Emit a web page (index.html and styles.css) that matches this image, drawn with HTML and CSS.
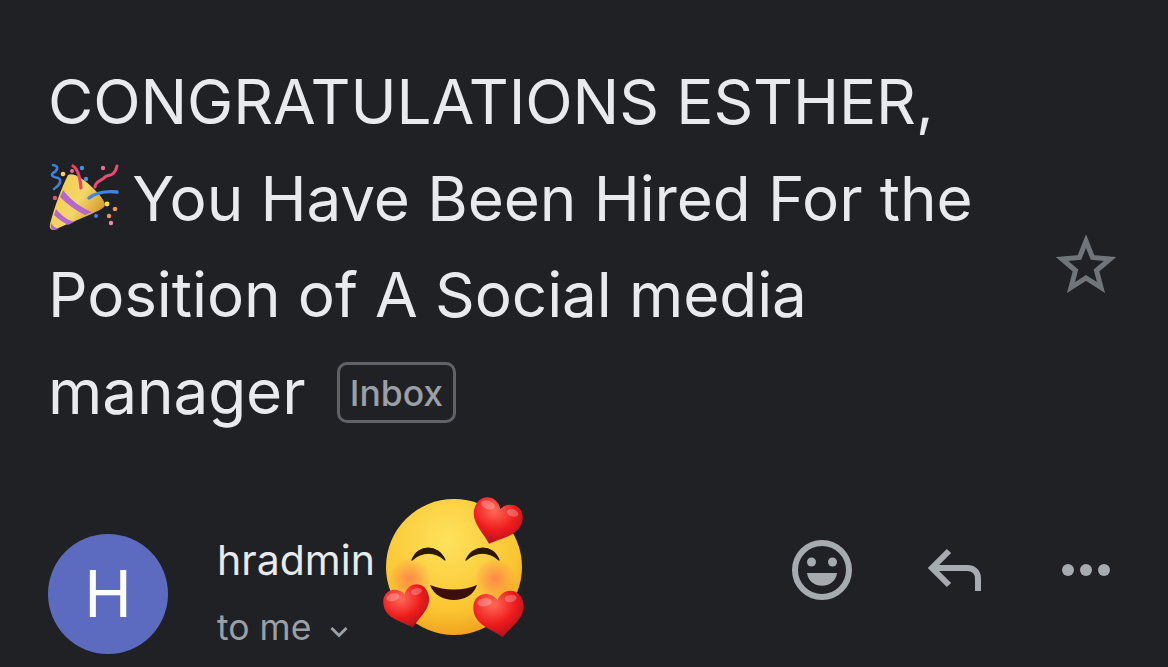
FILE: index.html
```html
<!DOCTYPE html>
<html lang="en">

<head>
    <meta charset="UTF-8">
    <meta name="viewport" content="width=device-width, initial-scale=1.0">
    <title>Email</title>
    <link rel="stylesheet" href="styles.css">
</head>

<body>
    <svg class="defs" width="0" height="0" aria-hidden="true">
        <defs>
            <radialGradient id="faceFill" cx="45%" cy="30%" r="75%">
                <stop offset="0" stop-color="#fde25c"/>
                <stop offset="0.7" stop-color="#fbc531"/>
                <stop offset="1" stop-color="#ee9a1c"/>
            </radialGradient>
            <radialGradient id="heartFill" cx="40%" cy="25%" r="80%">
                <stop offset="0" stop-color="#ff6a5a"/>
                <stop offset="0.55" stop-color="#ee1c1c"/>
                <stop offset="1" stop-color="#a80f1e"/>
            </radialGradient>
            <radialGradient id="blushFill">
                <stop offset="0" stop-color="#ff6b4f" stop-opacity="0.7"/>
                <stop offset="1" stop-color="#ff6b4f" stop-opacity="0"/>
            </radialGradient>
            <linearGradient id="coneFill" x1="0" y1="0" x2="1" y2="0.6">
                <stop offset="0" stop-color="#f7c843"/>
                <stop offset="0.6" stop-color="#f3d76a"/>
                <stop offset="1" stop-color="#d5972a"/>
            </linearGradient>
            <g id="heart">
                <path d="M0 -9C-5 -19 -21 -18 -21 -3C-21 9 -7 15 0 22C7 15 21 9 21 -3C21 -18 5 -19 0 -9Z"/>
                <ellipse cx="-11" cy="-9" rx="6" ry="3.500" fill="#fff" opacity="0.250"/>
                <ellipse cx="11" cy="-9" rx="5" ry="3" fill="#fff" opacity="0.250"/>
            </g>
        </defs>
    </svg>

    <main class="message">
        <section class="subject-row">
            <h1 class="subject">
                CONGRATULATIONS ESTHER,<br>
                <svg class="popper" viewBox="0 0 72 68" aria-hidden="true">
                    <path d="M20 12C25 9 36 16 46 26C54 34 59 41 56 44C50 49 34 55 8 66C4 68 1 66 2 61C7 42 14 24 20 12Z" fill="url(#coneFill)"/>
                    <path d="M15 27C21 35 31 44 44 49L37 52C27 47 18 40 12 34Z" fill="#b566cf"/>
                    <path d="M8 46C13 52 19 57 26 59L20 62C15 59 10 56 6 52Z" fill="#b566cf"/>
                    <path d="M3 60C5 63 7 65 11 66L6 67C4 67 2 65 3 60Z" fill="#b566cf"/>
                    <path d="M5 2C12 3 9 8 5 10C2 13 6 14 10 15C15 17 11 23 6 26" fill="none" stroke="#3d7fe0" stroke-width="2.6" stroke-linecap="round"/>
                    <path d="M25 3C30 6 32 14 33 25" fill="none" stroke="#ef3f6b" stroke-width="3.2" stroke-linecap="round"/>
                    <path d="M47 24C47 18 54 18 57 14C60 11 66 15 69 3" fill="none" stroke="#ef4a74" stroke-width="3" stroke-linecap="round"/>
                    <path d="M41 35C49 29 59 28 69 29" fill="none" stroke="#3d86e8" stroke-width="3.4" stroke-linecap="round"/>
                    <circle cx="15" cy="11" r="2.300" fill="#f6d84a"/>
                    <circle cx="24" cy="8" r="2" fill="#ef6a9a"/>
                    <circle cx="34" cy="5" r="2.200" fill="#3d94e8"/>
                    <circle cx="38" cy="16" r="2.200" fill="#3d94e8"/>
                    <circle cx="55" cy="5" r="2.200" fill="#ef6a9a"/>
                    <circle cx="7" cy="35" r="2.200" fill="#e0557a"/>
                    <circle cx="59" cy="41" r="2.400" fill="#f6e04a"/>
                    <circle cx="67" cy="46" r="2.300" fill="#ee9a45"/>
                    <circle cx="61" cy="53" r="2.200" fill="#ee9a45"/>
                    <circle cx="48" cy="53" r="2" fill="#3d86e8"/>
                    <circle cx="63" cy="60" r="2.200" fill="#ef8aa8"/>
                </svg>
                You Have Been Hired For the Position of A Social media manager
                <span class="label">Inbox</span>
            </h1>
            <button class="star" aria-label="Star">
                <svg viewBox="0 0 60 58" width="60" height="58">
                    <path d="M30 6L36.500 22.500L54 24L40.500 35.500L45 52.500L30 43L15 52.500L19.500 35.500L6 24L23.500 22.500Z" fill="none" stroke="#70757a" stroke-width="5"/>
                </svg>
            </button>
        </section>

        <section class="sender-row">
            <div class="avatar">H</div>
            <div class="sender">
                <div class="sender-name">hradmin</div>
                <div class="sender-to">to me
                    <svg viewBox="0 0 20 12" width="20" height="12">
                        <path d="M2.500 2L10 9.500L17.500 2" fill="none" stroke="#9aa0a6" stroke-width="3"/>
                    </svg>
                </div>
                <svg class="reaction" viewBox="0 0 144 144" aria-hidden="true">
                    <circle cx="71" cy="70" r="68" fill="url(#faceFill)"/>
                    <circle cx="27" cy="82" r="21" fill="url(#blushFill)"/>
                    <circle cx="112" cy="82" r="21" fill="url(#blushFill)"/>
                    <path d="M29 63C35 47 55 47 62 63C52 54 39 54 29 63Z" fill="#2b1708" stroke="#2b1708" stroke-width="1.200" stroke-linejoin="round"/>
                    <path d="M83 63C90 47 110 47 116 63C106 54 93 54 83 63Z" fill="#2b1708" stroke="#2b1708" stroke-width="1.200" stroke-linejoin="round"/>
                    <path d="M47 88C62 94 80 94 94 88C88 108 54 108 47 88Z" fill="#3c0f0a"/>
                    <use href="#heart" transform="translate(114 22) rotate(18) scale(1.180)" fill="url(#heartFill)"/>
                    <use href="#heart" transform="translate(24 107) rotate(-14) scale(1.100)" fill="url(#heartFill)"/>
                    <use href="#heart" transform="translate(116 114) rotate(-8) scale(1.200)" fill="url(#heartFill)"/>
                </svg>
            </div>
            <div class="actions">
                <svg viewBox="0 0 62 62" width="62" height="62">
                    <circle cx="31" cy="31" r="27" fill="none" stroke="#a6abb0" stroke-width="6"/>
                    <circle cx="20.500" cy="23" r="4.500" fill="#a6abb0"/>
                    <circle cx="41.500" cy="23" r="4.500" fill="#a6abb0"/>
                    <path d="M16 34H46C44 51 18 51 16 34Z" fill="#a6abb0"/>
                </svg>
                <svg viewBox="0 0 56 44" width="56" height="44">
                    <path d="M22 3L5 20L22 37M5 20H40C48 20 51 25 51 31V43" fill="none" stroke="#a6abb0" stroke-width="6"/>
                </svg>
                <svg class="more" viewBox="0 0 50 14" width="50" height="14">
                    <circle cx="7" cy="7" r="6" fill="#a6abb0"/>
                    <circle cx="25" cy="7" r="6" fill="#a6abb0"/>
                    <circle cx="43" cy="7" r="6" fill="#a6abb0"/>
                </svg>
            </div>
        </section>
    </main>
</body>

</html>
```

FILE: styles.css
```css
html,
body {
    height: 100%;
}

body {
    margin: 0;
    overflow: hidden;
    background-color: #202124;
    font-family: Inter, "Liberation Sans", sans-serif;
}

.defs {
    display: block;
}

.message {
    padding: 54px 57px 0 48px;
}

.subject-row {
    display: flex;
    gap: 60px;
}

.subject {
    flex: 1;
    margin: 0;
    color: #e8eaed;
    font-size: 62px;
    font-weight: 400;
    line-height: 96.500px;
    letter-spacing: -0.100px;
}

.popper {
    width: 72px;
    height: 68px;
    margin-right: -5px;
    vertical-align: -10px;
}

.label {
    display: inline-block;
    margin-left: 14px;
    padding: 3px 10px 0;
    border: 3px solid #5f6368;
    border-radius: 10px;
    color: #9aa0a6;
    font-size: 35.500px;
    font-weight: 500;
    line-height: 52px;
    letter-spacing: 0;
    vertical-align: 8px;
}

.star {
    flex: none;
    align-self: flex-start;
    display: flex;
    margin-top: 181px;
    margin-right: -5px;
    padding: 0;
    border: none;
    background: none;
}

.sender-row {
    display: flex;
    align-items: center;
    margin-top: 94px;
}

.avatar {
    flex: none;
    width: 120px;
    height: 120px;
    border-radius: 50%;
    background-color: #5c6bc0;
    color: #fff;
    font-size: 64px;
    line-height: 120px;
    text-align: center;
}

.sender {
    position: relative;
    flex: 1;
    align-self: flex-start;
    margin-left: 49px;
}

.sender-name {
    color: #e8eaed;
    font-size: 41px;
    line-height: 52px;
}

.sender-to {
    margin-top: 21px;
    color: #9aa0a6;
    font-size: 35.500px;
    line-height: 42px;
}

.sender-to svg {
    margin-left: 8px;
    vertical-align: 2px;
}

.reaction {
    position: absolute;
    left: 166px;
    top: -37px;
    width: 144px;
    height: 144px;
    overflow: visible;
}

.actions {
    display: flex;
    align-items: center;
    gap: 74px;
    margin-top: -48px;
}

.more {
    margin-left: 4px;
}
```
